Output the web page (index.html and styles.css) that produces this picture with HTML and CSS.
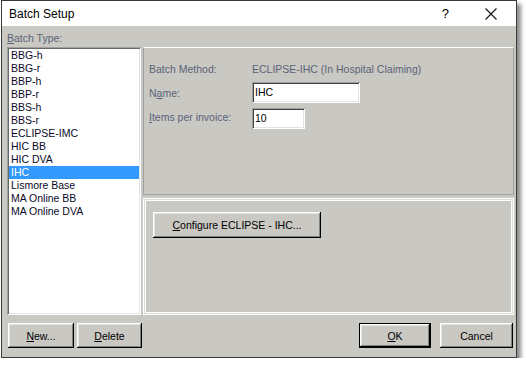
FILE: index.html
```html
<!DOCTYPE html>
<html lang="en">
<head>
    <meta charset="UTF-8">
    <title>Batch Setup</title>
    <link rel="stylesheet" href="styles.css">
</head>
<body>
    <div class="window">
        <div class="titlebar">
            <span class="title">Batch Setup</span>
            <span class="help">?</span>
            <svg class="close" width="12" height="12" viewBox="0 0 12 12">
                <path d="M0.5 0.5 L11.5 11.5 M11.5 0.5 L0.5 11.5" stroke="#111" stroke-width="1.1" fill="none"/>
            </svg>
        </div>
        <div class="client">
            <div class="caption"><u>B</u>atch Type:</div>
            <div class="main">
                <div class="listbox">
                    <div class="item">BBG-h</div>
                    <div class="item">BBG-r</div>
                    <div class="item">BBP-h</div>
                    <div class="item">BBP-r</div>
                    <div class="item">BBS-h</div>
                    <div class="item">BBS-r</div>
                    <div class="item">ECLIPSE-IMC</div>
                    <div class="item">HIC BB</div>
                    <div class="item">HIC DVA</div>
                    <div class="item selected">IHC</div>
                    <div class="item">Lismore Base</div>
                    <div class="item">MA Online BB</div>
                    <div class="item">MA Online DVA</div>
                </div>
                <div class="right">
                    <div class="group-top">
                        <div class="form">
                            <span class="lbl">Batch Method:</span>
                            <span class="lbl value">ECLIPSE-IHC (In Hospital Claiming)</span>
                            <span class="lbl">N<u>a</u>me:</span>
                            <div class="field name">IHC</div>
                            <span class="lbl"><u>I</u>tems per invoice:</span>
                            <div class="field count">10</div>
                        </div>
                    </div>
                    <div class="group-bottom">
                        <button class="btn configure"><u>C</u>onfigure ECLIPSE - IHC...</button>
                    </div>
                </div>
            </div>
            <div class="footer">
                <button class="btn new"><u>N</u>ew...</button>
                <button class="btn delete"><u>D</u>elete</button>
                <div class="spacer"></div>
                <button class="btn ok default"><u>O</u>K</button>
                <button class="btn cancel">Cancel</button>
            </div>
        </div>
    </div>
</body>
</html>
```

FILE: styles.css
```css
body {
    margin: 0;
    background: #fff;
    font-family: 'Liberation Sans', Arial, sans-serif;
}
.window {
    margin-left: 1px;
    width: 514px;
    height: 356px;
    border: 1px solid #3a3a3a;
    box-shadow: 4px 4px 4px rgba(0, 0, 0, 0.45);
    display: flex;
    flex-direction: column;
}
.titlebar {
    height: 25px;
    flex: none;
    background: #fff;
    display: flex;
    align-items: center;
    padding-left: 7px;
    font-size: 12px;
    color: #000;
}
.title {
    flex: 1;
}
.help {
    margin-right: 36px;
    font-size: 13px;
}
.close {
    margin-right: 19px;
}
.client {
    flex: 1;
    background: #c9c8c3;
    padding: 5px 2px 0 5px;
    font-size: 10.5px;
    display: flex;
    flex-direction: column;
}
.caption {
    height: 14px;
    line-height: 14px;
    margin-bottom: 2px;
    color: #5a6478;
}
.main {
    display: flex;
    gap: 2px;
    height: 268px;
}
.listbox {
    width: 134px;
    box-sizing: border-box;
    padding: 2px;
    background: #fff;
    box-shadow: inset 1px 1px #a0a0a0, inset -1px -1px #fff, inset 2px 2px #696969, inset -2px -2px #e3e3e3;
    color: #0a0a28;
}
.item {
    height: 13px;
    line-height: 13px;
    padding-left: 2px;
}
.item.selected {
    background: #3399ff;
    color: #fff;
}
.right {
    flex: 1;
    display: flex;
    flex-direction: column;
    gap: 3px;
}
.group-top {
    height: 148px;
    box-sizing: border-box;
    border: 1px solid #a0a0a0;
    border-top-color: #fff;
    padding: 11px 0 0 5px;
}
.form {
    display: grid;
    grid-template-columns: 103px auto;
    grid-template-rows: 20px 21px 21px;
    row-gap: 3px;
    align-items: center;
    justify-items: start;
}
.form .lbl {
    color: #5a6478;
}
.form .field:last-child {
    margin-top: 3px;
}
.field {
    height: 21px;
    box-sizing: border-box;
    background: #fff;
    line-height: 21px;
    padding-left: 3px;
    color: #000;
    box-shadow: inset 1px 1px #a0a0a0, inset -1px -1px #fff, inset 2px 2px #404040, inset -2px -2px #e3e3e3;
}
.field.name {
    width: 108px;
}
.field.count {
    width: 53px;
}
.group-bottom {
    flex: 1;
    box-sizing: border-box;
    border: 1px solid #fff;
    box-shadow: inset 0 0 0 1px #dddcd8, inset 0 0 0 2px #fff;
    padding: 13px 0 0 9px;
}
.btn {
    font-family: inherit;
    font-size: 10.5px;
    color: #000;
    background: #c9c8c3;
    border: none;
    padding: 0;
    height: 25px;
    box-shadow: inset -1px -1px #000, inset 1px 1px #fff, inset -2px -2px #808080, inset 2px 2px #e3e3e3;
}
.btn.default {
    border: 1px solid #000;
}
.configure {
    width: 168px;
    height: 26px;
}
.footer {
    display: flex;
    gap: 3px;
    margin-top: 8px;
    padding-left: 1px;
    padding-right: 1px;
}
.spacer {
    flex: 1;
}
.new { width: 66px; }
.delete { width: 65px; }
.ok { width: 72px; margin-right: 6px; }
.cancel { width: 73px; }
```
